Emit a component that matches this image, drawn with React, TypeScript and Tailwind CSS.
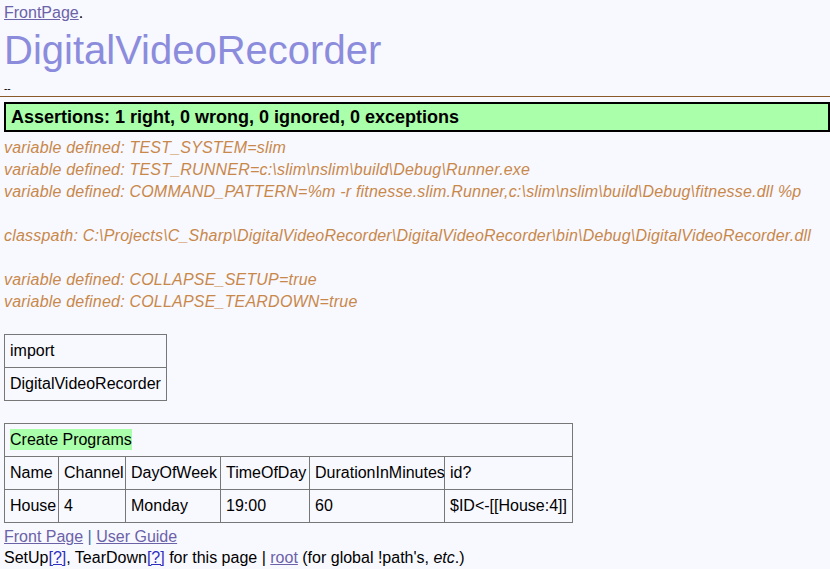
const variables = [
  "TEST_SYSTEM=slim",
  "TEST_RUNNER=c:\\slim\\nslim\\build\\Debug\\Runner.exe",
  "COMMAND_PATTERN=%m -r fitnesse.slim.Runner,c:\\slim\\nslim\\build\\Debug\\fitnesse.dll %p",
];

const collapse = ["COLLAPSE_SETUP=true", "COLLAPSE_TEARDOWN=true"];

const headers = ["Name", "Channel", "DayOfWeek", "TimeOfDay", "DurationInMinutes", "id?"];
const row = ["House", "4", "Monday", "19:00", "60", "$ID<-[[House:4]]"];
const widths = ["w-[54px]", "w-[67px]", "w-[95px]", "w-[89px]", "w-[135px]", "w-[128px]"];

const App = () => {
  return (
    <div className="min-h-screen bg-[#f8f8ff] px-1 pt-[2px] text-[16px] leading-[22px] text-black font-['Liberation_Sans',sans-serif]">
      <div>
        <a className="text-[#6b62a8] underline">FrontPage</a>.
      </div>
      <h1 className="text-[40px] leading-[48px] text-[#8c8cdc] mt-[2px]">DigitalVideoRecorder</h1>
      <div className="text-[10px] leading-[14px] mt-[8px]">--</div>

      <hr className="-mx-1 border-t border-[#8b5a2b]" />

      <div className="mt-[5px] -mr-1 border-2 border-black bg-[#aaffaa] px-[5px] py-[2px] text-[18px] leading-[22px] font-bold">
        Assertions: 1 right, 0 wrong, 0 ignored, 0 exceptions
      </div>

      {/* defined variables */}
      <div className="mt-[5px] italic text-[#c8884a] text-[16px] tracking-[0.2px]">
        {variables.map((v) => (
          <div key={v}>variable defined: {v}</div>
        ))}
        <div className="h-[22px]" />
        <div>classpath: C:\Projects\C_Sharp\DigitalVideoRecorder\DigitalVideoRecorder\bin\Debug\DigitalVideoRecorder.dll</div>
        <div className="h-[22px]" />
        {collapse.map((v) => (
          <div key={v}>variable defined: {v}</div>
        ))}
      </div>

      <table className="mt-[21px] border-collapse">
        <tbody>
          <tr>
            <td className="border border-[#777] px-[5px] h-[33px]">import</td>
          </tr>
          <tr>
            <td className="border border-[#777] px-[5px] h-[33px]">DigitalVideoRecorder</td>
          </tr>
        </tbody>
      </table>

      <table className="mt-[22px] border-collapse table-fixed w-[568px]">
        <tbody>
          <tr>
            {widths.map((w, i) => (
              <td key={i} className={`${w} p-0 h-0`} />
            ))}
          </tr>
          <tr>
            <td colSpan={6} className="border border-[#777] px-[5px] h-[33px]">
              <span className="bg-[#aaffaa] py-[2px]">Create Programs</span>
            </td>
          </tr>
          <tr>
            {headers.map((h) => (
              <td key={h} className="border border-[#777] px-[5px] h-[33px] whitespace-nowrap">
                {h}
              </td>
            ))}
          </tr>
          <tr>
            {row.map((c, i) => (
              <td key={i} className="border border-[#777] px-[5px] h-[33px] whitespace-nowrap">
                {c}
              </td>
            ))}
          </tr>
        </tbody>
      </table>

      {/* footer */}
      <div className="mt-[3px]">
        <a className="text-[#6b62a8] underline">Front Page</a> <span className="text-[#3a6ea5]">|</span>{" "}
        <a className="text-[#6b62a8] underline">User Guide</a>
      </div>
      <div className="-mt-[1px]">
        SetUp<a className="text-[#2f2fbf] underline">[?]</a>, TearDown<a className="text-[#2f2fbf] underline">[?]</a> for this page |{" "}
        <a className="text-[#6b62a8] underline">root</a> (for global !path's, <i>etc</i>.)
      </div>
    </div>
  );
};

export default App;
